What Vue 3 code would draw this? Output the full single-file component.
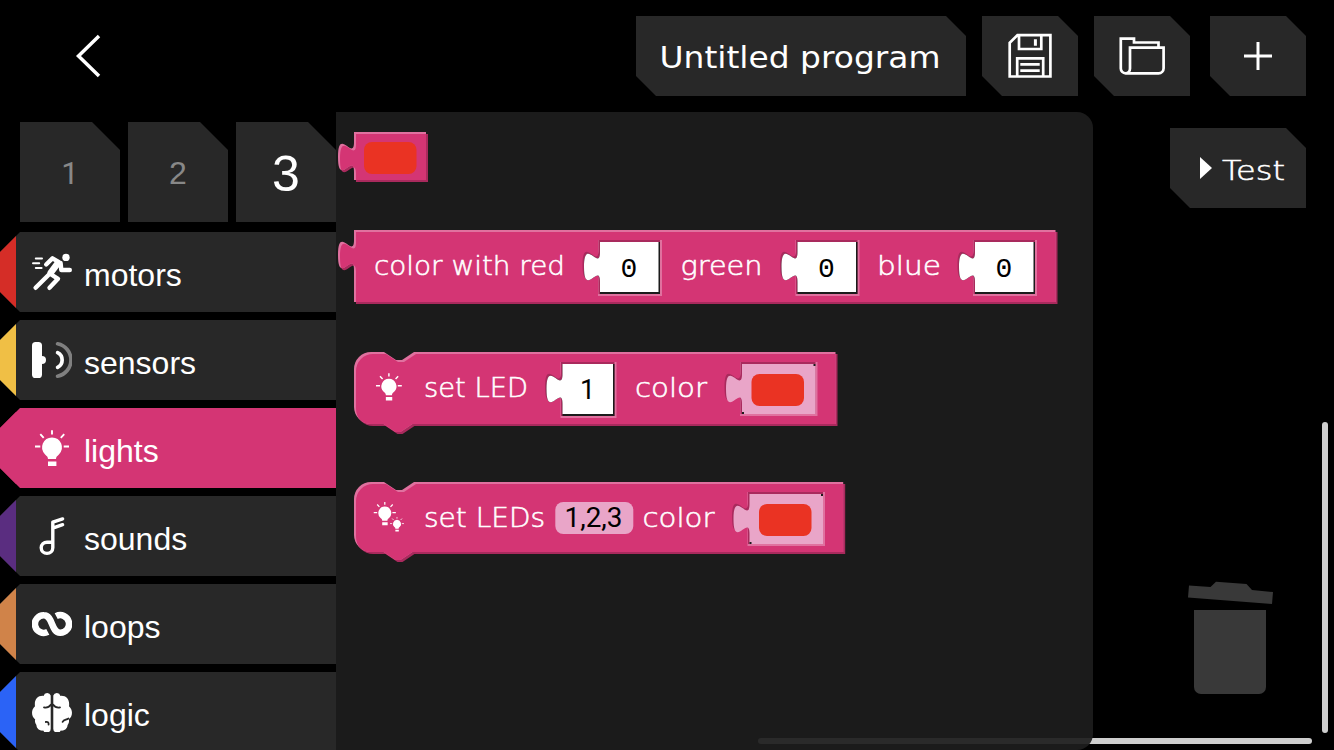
<script setup>
const tabs = ['1', '2', '3']
const categories = [
  { id: 'motors', color: '#d52d27' },
  { id: 'sensors', color: '#f0bf45' },
  { id: 'lights', color: '#d43574' },
  { id: 'sounds', color: '#5a2d80' },
  { id: 'loops', color: '#d08349' },
  { id: 'logic', color: '#2b63f6' }
]

const socket = (x, y, w, h) =>
  `M${x} ${y}h${w}v${h}h${-w}V${y + 40}c0-20-16 16-16-15s16 5 16-15z`
const statement = (right, top, bottom) =>
  `M354 ${top + 17}a17 17 0 0 1 17-17H384l12 8h6l12-8H${right}V${bottom}H412.5l-12 8h-5l-12-8H371a17 17 0 0 1-17-17z`

const blocks = [
  {
    id: 'picker', top: 112, height: 109, path: socket(354, 132, 72, 48),
    labels: [], numbers: [], slots: [], bulbs: [],
    swatches: [{ x: 364, y: 142 }]
  },
  {
    id: 'rgb', top: 221, height: 111, path: socket(354, 230, 701.5, 72),
    labels: [
      { t: 'color with red', x: 374, y: 275, w: 191 },
      { t: 'green', x: 680.5, y: 275, w: 82 },
      { t: 'blue', x: 877, y: 275, w: 64 }
    ],
    numbers: [
      { x: 600, y: 242, w: 60, t: '0' },
      { x: 797.5, y: 242, w: 60, t: '0' },
      { x: 975, y: 242, w: 60, t: '0' }
    ],
    slots: [], bulbs: [], swatches: []
  },
  {
    id: 'led', top: 332, height: 130, path: statement(835.5, 352, 424),
    labels: [
      { t: 'set LED', x: 424, y: 397, w: 104 },
      { t: 'color', x: 635, y: 397, w: 72 }
    ],
    numbers: [{ x: 562.5, y: 364, w: 52, t: '1' }],
    slots: [{ x: 742, y: 364, w: 73.5 }],
    bulbs: [{ x: 373.7, y: 371.6, s: 0.76 }],
    swatches: [{ x: 751.5, y: 374 }]
  },
  {
    id: 'leds', top: 462, height: 130, path: statement(843.2, 482, 552),
    labels: [
      { t: 'set LEDs', x: 424, y: 527, w: 121 },
      { t: 'color', x: 642.5, y: 527, w: 72 }
    ],
    numbers: [],
    slots: [{ x: 749.5, y: 494, w: 73.5 }],
    bulbs: [{ x: 371.8, y: 500.5, s: 0.65 }, { x: 388.8, y: 516, s: 0.41 }],
    swatches: [{ x: 759, y: 504 }],
    field: true
  }
]
</script>

<template>
  <div class="app">
    <svg width="0" height="0" class="defs">
      <defs>
        <g id="bulb">
          <path d="M20 9.4a9.9 9.9 0 0 1 6.9 17c-1.8 1.7-2.9 2.4-2.9 4.6h-8c0-2.2-1.1-2.9-2.9-4.6a9.9 9.9 0 0 1 6.9-17zM16 33.4h8.4V38H16z" fill="#fff" />
          <path d="M20 2.3v4.2M3 18.5h5.3M31.7 18.5H37M8.3 6.2l3.4 3.6M32.2 6.2l-3.4 3.6" stroke="#fff" stroke-width="1.9" fill="none" />
        </g>
      </defs>
    </svg>

    <header class="header">
      <button class="back" aria-label="Back">
        <svg width="40" height="48"><path d="M31 4 10.5 24 31 44" fill="none" stroke="#fff" stroke-width="3.5" /></svg>
      </button>
      <div class="actions">
        <button class="chip title">
          <svg width="330" height="80"><text x="23.5" y="52" textLength="281" lengthAdjust="spacingAndGlyphs" class="title-text">Untitled program</text></svg>
        </button>
        <button class="chip" aria-label="Save">
          <svg width="96" height="80" fill="none" stroke="#fff" stroke-width="2.7">
            <path d="M35.5 19.2H68.4V60.5H27.7V26.8zM37 19.2V33H59.3V19.2M35.2 60.5V42.3H61.2V60.5M38.3 48.4H57.7M38.3 54.6H57.7" />
            <path d="M53.4 23.2V29.7" stroke-width="3" />
          </svg>
        </button>
        <button class="chip" aria-label="Open">
          <svg width="96" height="80" fill="none" stroke="#fff" stroke-width="2.7">
            <path d="M64.5 31.7V26.5H40V22.7H26.8V52.5a4.8 4.8 0 0 0 4.8 4.8H64.6a5 5 0 0 0 5-5V31.7H36V52.5a4.8 4.8 0 0 1-4.4 4.8" />
          </svg>
        </button>
        <button class="chip add" aria-label="Add">
          <svg width="96" height="80"><path d="M34 40H62M48 26V54" stroke="#fff" stroke-width="3" /></svg>
        </button>
      </div>
    </header>

    <main class="body">
      <aside class="sidebar">
        <nav class="tabs">
          <button v-for="t in tabs" :key="t" class="tab" :class="{ active: t === '3', first: t === '1' }">{{ t }}</button>
        </nav>
        <ul class="categories">
          <li v-for="c in categories" :key="c.id" class="category" :class="{ selected: c.id === 'lights' }">
            <span class="strip" :style="{ background: c.color }"></span>
            <svg class="icon" width="40" height="40" viewBox="0 0 40 40">
              <g v-if="c.id === 'motors'" fill="none" stroke="#fff" stroke-linecap="round" stroke-linejoin="round" stroke-width="4.4">
                <circle cx="34" cy="5.4" r="3.7" fill="#fff" stroke="none" />
                <path d="M14.2 12.5 20.5 6.3 26.5 9.8M28.6 11 29.3 18H37.8M17.5 22 3.6 35.8M18.5 22 26 26.8 17.5 35.8" />
                <path d="M25.8 11.2 18.8 20.6" stroke-width="6.6" />
                <path d="M3.8 6.4H10M1 11.3H7.2M3.8 16.1H9.6" stroke-width="2" />
              </g>
              <g v-else-if="c.id === 'sensors'" fill="none" stroke-width="3.7" stroke-linecap="round">
                <rect y="2" width="10" height="36" rx="3.6" fill="#fff" />
                <circle cx="10" cy="20" r="4" fill="#fff" />
                <path d="M25.6 3.8a16.5 16.5 0 0 1 0 32.4" stroke="#808080" />
                <path d="M25.6 12.6a8.3 8.3 0 0 1 0 14.8" stroke="#fff" />
              </g>
              <use v-else-if="c.id === 'lights'" href="#bulb" />
              <g v-else-if="c.id === 'sounds'" fill="none" stroke="#fff" stroke-width="3.4" stroke-linecap="round" stroke-linejoin="round">
                <path d="M20.8 31.8a5.8 5.6 0 1 1-5.8-5.6h5.8M20.8 31.8V6.2L30.6 2.9M21.5 11.8 30.6 8.7" />
              </g>
              <path v-else-if="c.id === 'loops'" d="M15.8 27.9A8.8 8.8 0 1 1 12 11.3C21 11.3 19 28.7 28 28.7A8.8 8.8 0 1 0 24.2 12.1" fill="none" stroke="#fff" stroke-width="6.6" />
              <g v-else>
                <g v-for="side in [1, -1]" :key="side" :transform="side === 1 ? '' : 'translate(40 0) scale(-1 1)'" fill="#fff">
                  <path d="M11.6 3.9A3.7 3.7 0 0 1 18.7 3.6V36.4A4 4 0 0 1 11.2 38.6C8.2 39.2 4.6 37 4.4 33 3 31 2.6 29 3.2 27.4-1 24.5-1 17.5 3 14.2 2 8 5.5 3.4 11.6 3.9z" />
                </g>
                <path d="M12 15.4c3 .6 5-.2 7-2.8M28 15.4c-3 .6-5-.2-7-2.8M13.8 30c2.2-.4 3 .8 2.8 2.6M36.5 26.5c-2.5 1.6-4.6 1-5.9 3.4" fill="none" stroke="#282828" stroke-width="1.8" stroke-linecap="round" />
              </g>
            </svg>
            <span class="name">{{ c.id }}</span>
          </li>
        </ul>
      </aside>

      <section class="flyout">
        <svg v-for="b in blocks" :key="b.id" class="block" width="757" :height="b.height" :viewBox="`336 ${b.top} 757 ${b.height}`">
          <clipPath :id="'clip-' + b.id"><path :d="b.path" /></clipPath>
          <path :d="b.path" transform="translate(2 2)" fill="#a92a5d" />
          <path :d="b.path" fill="#e0719f" />
          <g :clip-path="`url(#clip-${b.id})`"><path :d="b.path" transform="translate(2 2)" fill="#d43574" /></g>

          <use v-for="(u, i) in b.bulbs" :key="'u' + i" href="#bulb" :transform="`translate(${u.x} ${u.y}) scale(${u.s})`" />
          <text v-for="l in b.labels" :key="l.x" :x="l.x" :y="l.y" :textLength="l.w" lengthAdjust="spacingAndGlyphs" class="label">{{ l.t }}</text>

          <g v-for="n in b.numbers" :key="'n' + n.x">
            <path :d="`M${n.x - 2} ${n.y - 2}h${n.w + 4}v56h${-n.w - 4}z`" fill="#e0719f" />
            <path :d="socket(n.x - 1.5, n.y - 2, n.w + 1.5, 54)" fill="#a92a5d" />
            <path :d="socket(n.x, n.y, n.w, 52)" fill="#1b1b1b" />
            <path :d="socket(n.x, n.y, n.w - 1.5, 50)" fill="#fff" />
            <text :x="n.x + n.w / 2 - 1" :y="n.y + 35" text-anchor="middle" :class="n.t === '0' ? 'zero' : 'digit'">{{ n.t }}</text>
          </g>

          <g v-for="s in b.slots" :key="'s' + s.x">
            <path :d="`M${s.x - 2} ${s.y - 2}h${s.w + 4}v54h${-s.w - 4}z`" fill="#e0719f" />
            <path :d="socket(s.x - 1.5, s.y - 2, s.w + 1.5, 52)" fill="#a92a5d" />
            <path :d="socket(s.x, s.y, s.w, 50)" fill="#e9a5c8" />
            <path :d="`M${s.x} ${s.y + 48}h2v2h-2zM${s.x + s.w - 2} ${s.y}h2v2h-2z`" fill="#1b1b1b" />
          </g>
          <rect v-for="w in b.swatches" :key="'w' + w.x" :x="w.x" :y="w.y" width="52.5" height="32" rx="8" fill="#ea3323" />

          <g v-if="b.field">
            <rect x="555.3" y="502" width="78" height="32" rx="8" fill="#e9a5c8" />
            <text x="564.5" y="527" textLength="58" lengthAdjust="spacingAndGlyphs" class="digit">1,2,3</text>
          </g>
        </svg>
      </section>

      <button class="chip test">
        <svg width="136" height="80">
          <path d="M30 29 42 40 30 51z" fill="#fff" />
          <text x="52" y="52" textLength="63" lengthAdjust="spacingAndGlyphs" class="label">Test</text>
        </svg>
      </button>
    </main>

    <svg class="trash" width="90" height="116" viewBox="1186 580 90 116" fill="#393939">
      <path d="M1189 585.6 1210.5 587 1216 581.8 1246.5 584 1252 590 1273 592 1272 604 1188 597.6z" />
      <path d="M1194 610H1266V687a7 7 0 0 1-7 7H1201a7 7 0 0 1-7-7z" />
    </svg>
    <div class="bar vertical"></div>
    <div class="bar horizontal"></div>
  </div>
</template>

<style>
body { background: #000; overflow: hidden; }
</style>

<style scoped>
.app {
  position: relative;
  width: 1334px;
  height: 750px;
  overflow: hidden;
  background: #000;
  color: #fff;
  font-family: "Liberation Sans", Arial, sans-serif;
}
.defs { position: absolute; }
svg { display: block; flex: none; }
button { border: 0; padding: 0; background: none; color: inherit; font: inherit; }
.header {
  height: 112px;
  box-sizing: border-box;
  padding: 16px 28px 16px 68px;
  display: flex;
  justify-content: space-between;
}
.back { height: 80px; display: flex; align-items: center; }
.actions { display: flex; gap: 16px; }
.chip {
  height: 80px;
  background: #282828;
  clip-path: polygon(0 0, calc(100% - 20px) 0, 100% 20px, 100% 100%, 20px 100%, 0 calc(100% - 20px));
}
.add { margin-left: 4px; }
.body { display: flex; height: 638px; }
.sidebar { width: 336px; flex: none; overflow: hidden; }
.tabs { display: flex; gap: 8px; padding: 10px 0 10px 20px; }
.tab {
  width: 100px;
  height: 100px;
  flex: none;
  background: #282828;
  clip-path: polygon(0 0, 72px 0, 100% 28px, 100% 100%, 0 100%);
  font-size: 32px;
  color: #888;
  padding-top: 2px;
}
.tab.first { font-family: Roboto, sans-serif; font-size: 31px; }
.tab.active { font-size: 50px; color: #fff; padding-top: 4px; }
.categories { list-style: none; margin: 0; padding: 0; display: flex; flex-direction: column; gap: 8px; }
.category {
  height: 80px;
  flex: none;
  display: flex;
  align-items: center;
  background: #282828;
  clip-path: polygon(20px 0, 100% 0, 100% 100%, 20px 100%, 0 60px, 0 20px);
}
.category.selected { background: #d43574; }
.strip { width: 16px; height: 80px; }
.icon { margin-left: 16px; }
.name { font-size: 32px; line-height: 36px; margin-left: 12px; padding-top: 6px; }
.flyout {
  position: relative;
  z-index: 2;
  width: 757px;
  flex: none;
  background: rgba(29, 29, 29, 0.93);
  border-radius: 0 16px 16px 0;
}
.test { margin: 16px 0 0 77px; }
.label { font-family: "DejaVu Sans", sans-serif; font-weight: 200; font-size: 27px; fill: #fff; stroke: #fff; stroke-width: 0.55px; }
.digit { font-family: Roboto, sans-serif; font-weight: 400; font-size: 27px; fill: #000; }
.zero { font-family: "Liberation Mono", monospace; font-size: 28px; fill: #000; }
.title-text { font-family: "DejaVu Sans", sans-serif; font-size: 29.5px; fill: #fff; }
.trash { position: absolute; left: 1186px; top: 580px; }
.bar { position: absolute; background: #cecece; border-radius: 3px; }
.vertical { left: 1322px; top: 422px; width: 6px; height: 311px; }
.horizontal { left: 758px; top: 738px; width: 554px; height: 6px; }
</style>
